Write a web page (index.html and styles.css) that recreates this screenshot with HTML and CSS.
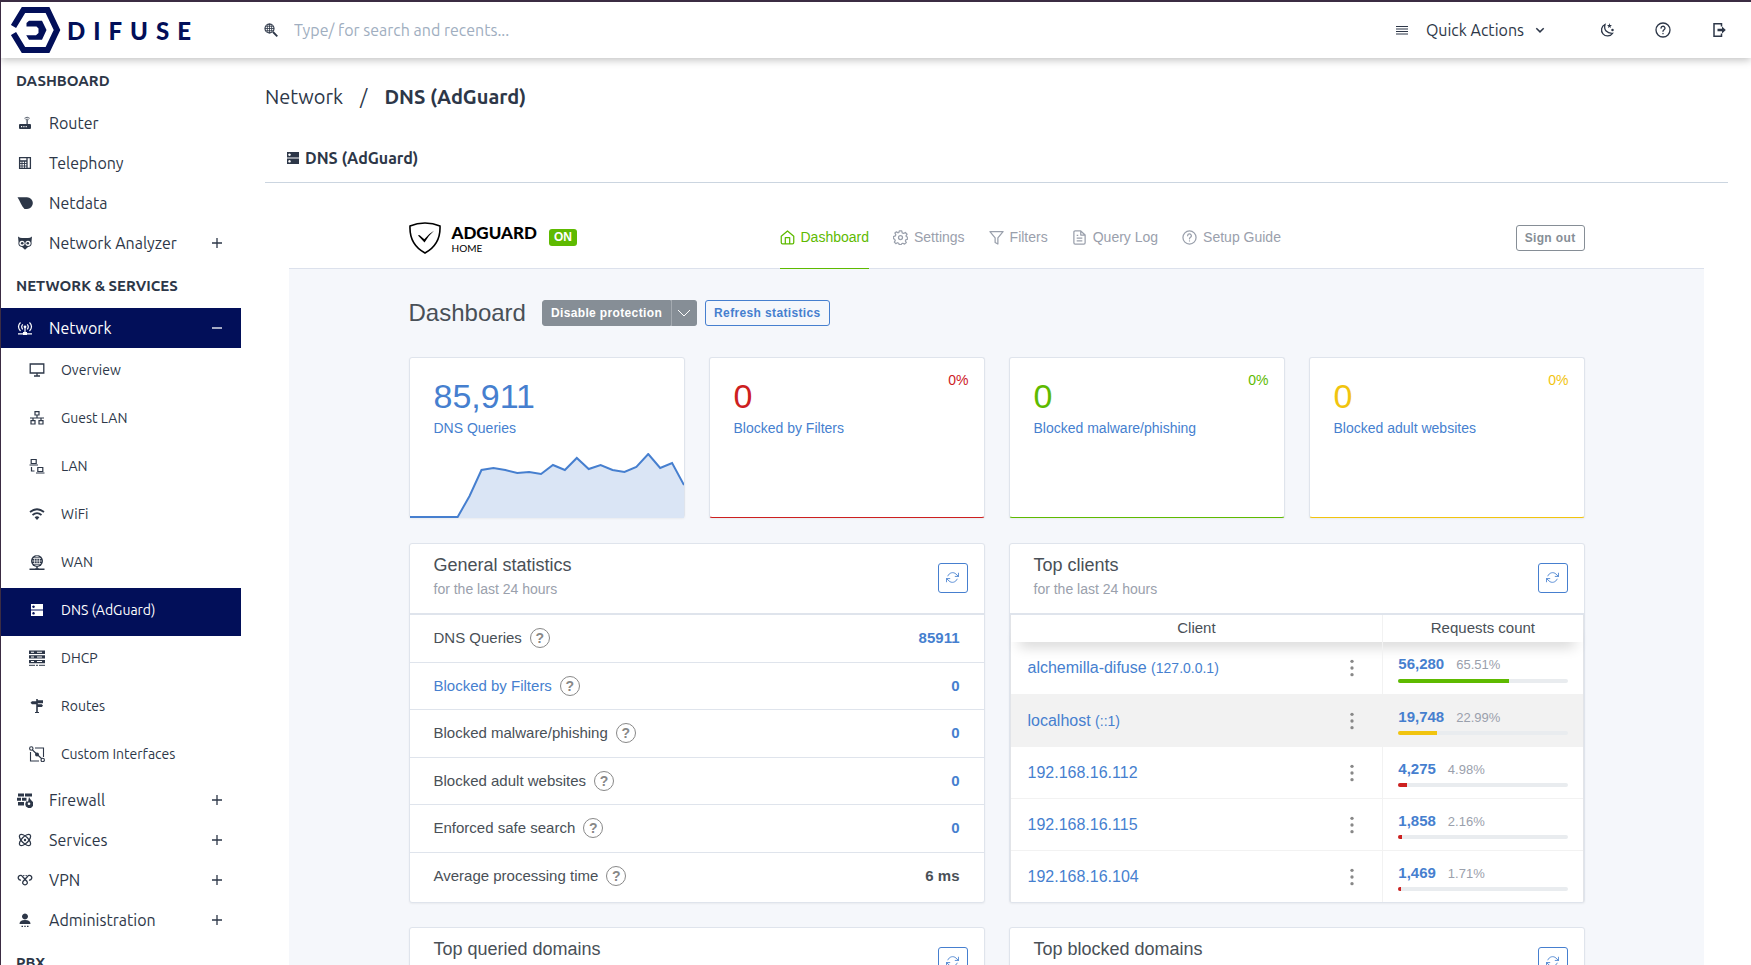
FILE: index.html
```html
<!DOCTYPE html>
<html lang="en">
<head>
    <title>Difuse - DNS (AdGuard)</title>
    <meta charset="UTF-8">
    <meta name="viewport" content="width=device-width, initial-scale=1.0">
    <link rel="stylesheet" href="styles.css">
</head>
<body>
    <!-- shared icons -->
    <svg class="sprite" aria-hidden="true">
        <symbol id="i-plus" viewBox="0 0 16 16"><path d="M8 3v10M3 8h10" fill="none" stroke="currentColor" stroke-width="1.3"/></symbol>
        <symbol id="i-minus" viewBox="0 0 16 16"><path d="M3 8h10" fill="none" stroke="currentColor" stroke-width="1.3"/></symbol>
        <symbol id="i-dns" viewBox="0 0 16 16"><path fill="currentColor" fill-rule="evenodd" d="M2 2h12v5.400H2zM2 8.600h12V14H2zM4.500 3.400a1.300 1.300 0 1 0 .01 0zM4.500 10a1.300 1.300 0 1 0 .01 0z"/></symbol>
        <symbol id="i-refresh" viewBox="0 0 24 24"><path d="M23 4v6h-6M1 20v-6h6M3.500 9a9 9 0 0 1 14.900-3.400L23 10M1 14l4.600 4.400A9 9 0 0 0 20.500 15" fill="none" stroke="currentColor" stroke-width="1.600" stroke-linecap="round" stroke-linejoin="round"/></symbol>
        <symbol id="i-help" viewBox="0 0 24 24"><g fill="none" stroke="currentColor" stroke-width="2" stroke-linecap="round"><circle cx="12" cy="12" r="10.500"/><path d="M9 9.200a3 3 0 0 1 6 .3c0 2-3 2.300-3 4.500M12 17.200v.3"/></g></symbol>
        <symbol id="i-dots" viewBox="0 0 24 24"><g fill="#888"><circle cx="12" cy="4" r="2"/><circle cx="12" cy="12" r="2"/><circle cx="12" cy="20" r="2"/></g></symbol>
    </svg>

    <header class="topbar">
        <a class="brand" href="#">
            <svg viewBox="0 0 50 46" aria-hidden="true">
                <path d="M2.500 19.500L12.500 3H36.500L46 23l-9.500 20h-24L2.500 26.500" fill="none" stroke="#020f59" stroke-width="6"/>
                <path d="M15.500 16L18 13.700H31L35.500 23 31 32.700H18L15.200 28.200H25L27.500 26V21.500L25.500 19.500H15.500z" fill="#020f59"/>
            </svg>
            <span>DIFUSE</span>
        </a>
        <label class="search">
            <svg class="icon" viewBox="0 0 16 16"><g fill="none" stroke="currentColor"><circle cx="6.500" cy="6.500" r="4.500" stroke-width="1.200"/><path d="M2 6.500h9M2.800 4.300h7.400M2.800 8.700h7.400M6.500 2v9" stroke-width=".8"/><ellipse cx="6.500" cy="6.500" rx="2.200" ry="4.500" stroke-width=".8"/><path d="M10 10l4.300 4.300" stroke-width="1.800"/></g></svg>
            <input type="text" aria-label="Search" placeholder="Type/ for search and recents...">
        </label>
        <button class="quick">
            <svg class="icon" viewBox="0 0 16 16"><path d="M2 4.500h12M2 7h12M2 9.500h12M2 12h12" fill="none" stroke="currentColor" stroke-width="1.100"/></svg>
            <span>Quick Actions</span>
            <svg class="icon" viewBox="0 0 16 16"><path d="M4.300 6.300L8 9.900l3.700-3.600" fill="none" stroke="currentColor" stroke-width="1.500"/></svg>
        </button>
        <button class="tool" aria-label="Dark mode"><svg class="icon" viewBox="0 0 16 16"><g fill="none" stroke="currentColor" stroke-width="1.300"><path d="M6 2.500C4.500 8 8 11.500 13.500 11.300A6 6 0 1 1 6 2.500z"/><path d="M10.500 1l.6 1.900 1.900.1-1.500 1.200.5 1.900-1.500-1.100-1.600 1.100.5-1.900-1.400-1.200h1.900z" fill="currentColor" stroke="none"/><circle cx="13.500" cy="8" r=".6" fill="currentColor"/></g></svg></button>
        <button class="tool" aria-label="Help"><svg class="icon" viewBox="0 0 24 24"><use href="#i-help"/></svg></button>
        <button class="tool" aria-label="Log out"><svg class="icon" viewBox="0 0 16 16"><path d="M10.500 4.500V1.700H3v12.600h7.500v-2.800" fill="none" stroke="currentColor" stroke-width="1.500"/><path d="M6.500 6.800H11V4.600L14.800 8 11 11.400V9.200H6.500z" fill="currentColor"/></svg></button>
    </header>

    <div class="shell">
        <nav class="sidebar">
            <h2>DASHBOARD</h2>
            <a href="#"><svg class="icon" viewBox="0 0 16 16"><path fill="currentColor" fill-rule="evenodd" d="M9.500 9V5h1.200v4H13a1 1 0 0 1 1 1v3a1 1 0 0 1-1 1H3a1 1 0 0 1-1-1v-3a1 1 0 0 1 1-1zM4 11v1.200h1.200V11zm2.300 0v1.200h1.200V11zm2.300 0v1.200h1.200V11z"/><path d="M7.500 3.300q2.600-2.200 5.200 0M8.600 4.700q1.500-1.200 3 0" fill="none" stroke="currentColor" stroke-width=".8"/></svg>Router</a>
            <a href="#"><svg class="icon" viewBox="0 0 16 16"><path d="M2.600 2.600h10.800v10.800H2.600zM10 2.600v10.800M2.600 6H10" fill="none" stroke="currentColor" stroke-width="1.300"/><path d="M2.600 8.500H10M2.600 11H10M5 6v7.400M7.500 6v7.400" fill="none" stroke="currentColor" stroke-width=".9"/></svg>Telephony</a>
            <a href="#"><svg class="icon" viewBox="0 0 16 16"><path d="M.5 2.200H10a5.800 5.800 0 0 1 0 11.700H7.500C4.500 11 3 6 .5 2.200z" fill="currentColor"/></svg>Netdata</a>
            <a href="#"><svg class="icon" viewBox="0 0 16 16"><path d="M1 1.500q2 1.500 4 1.500h6q2 0 4-1.500l-.5 5q.8 5-3.500 5.500L8 14.800 5 12Q.700 11.500 1.500 6.500z" fill="currentColor"/><g fill="#fff"><circle cx="5" cy="8.300" r="2.600"/><circle cx="11" cy="8.300" r="2.600"/></g><g fill="currentColor"><circle cx="5.200" cy="8.300" r="1.300"/><circle cx="10.800" cy="8.300" r="1.300"/></g></svg>Network Analyzer<svg class="toggle"><use href="#i-plus"/></svg></a>
            <h2>NETWORK &amp; SERVICES</h2>
            <a href="#" class="active"><svg class="icon" viewBox="0 0 16 16"><g fill="none" stroke="currentColor" stroke-width="1.200"><path d="M3.500 2.500q-4 4 0 8.500M5.700 4.300q-2 2.500 0 5M12.500 2.500q4 4 0 8.500M10.300 4.300q2 2.500 0 5M8 7v6M1 13.800h14"/></g><circle cx="8" cy="6.800" r="1.400" fill="currentColor"/><path d="M6 12h4v3H6z" fill="currentColor"/></svg>Network<svg class="toggle"><use href="#i-minus"/></svg></a>
            <div class="submenu">
                <a href="#"><svg class="icon" viewBox="0 0 16 16"><path d="M1.200 2h13.600v9H1.200zM8 11v3M5 14h6" fill="none" stroke="currentColor" stroke-width="1.300"/></svg>Overview</a>
                <a href="#"><svg class="icon" viewBox="0 0 16 16"><path d="M6 1.700h4V5H6zM2 10.700h4V14H2zM10 10.700h4V14h-4zM8 5v3M1 8h14M4 8v2.500M12 8v2.500" fill="none" stroke="currentColor" stroke-width="1.200"/></svg>Guest LAN</a>
                <a href="#"><svg class="icon" viewBox="0 0 16 16"><path d="M2.200 1.500h5v4h-5zM.5 7H9M8.800 9.500h5v4h-5zM7 15h8.500M2.500 9v4h3" fill="none" stroke="currentColor" stroke-width="1.200"/></svg>LAN</a>
                <a href="#"><svg class="icon" viewBox="0 0 16 16"><g fill="none" stroke="currentColor" stroke-width="1.800"><path d="M1 6q7-5.500 14 0M3.500 9q4.500-3.700 9 0"/></g><path d="M5.600 11.300q2.400-1.900 4.800 0L8 14z" fill="currentColor"/></svg>WiFi</a>
                <a href="#"><svg class="icon" viewBox="0 0 16 16"><circle cx="8" cy="7" r="6" fill="currentColor"/><g fill="none" stroke="#fff" stroke-width=".7"><ellipse cx="8" cy="7" rx="2.500" ry="5"/><path d="M8 2v10M3 7h10M4 4.500h8M4 9.500h8"/></g><path d="M.5 15.200h15M8 12v3M6 15h4" fill="none" stroke="currentColor" stroke-width="1.500"/></svg>WAN</a>
                <a href="#" class="active"><svg class="icon"><use href="#i-dns"/></svg>DNS (AdGuard)</a>
                <a href="#"><svg class="icon" viewBox="0 0 16 16"><path fill="currentColor" fill-rule="evenodd" d="M0 .5h16v3.400H0zM0 5.200h16v3.400H0zM0 9.900h16v3.400H0zM2 1.700v1h3v-1zM8 1.700v1h5v-1zM2 6.400v1h3v-1zM8 6.400v1h5v-1zM2 11.100v1h3v-1zM8 11.100v1h5v-1z"/><path d="M0 15.300h6M7 15.300h2M10 15.300h6" stroke="currentColor"/></svg>DHCP</a>
                <a href="#"><svg class="icon" viewBox="0 0 16 16"><path fill="currentColor" d="M7.200 1h1.600v1.300H14v3H8.800v1h4L14 7.800 12.800 9h-4v5H10v1H6v-1h1.200V6.300H3L1.500 4.800 3 3.300h4.200z"/></svg>Routes</a>
                <a href="#"><svg class="icon" viewBox="0 0 16 16"><g fill="none" stroke="currentColor" stroke-width="1.100"><path d="M6 2h8.500v9M1.500 6v9H10M3.500 4l9.500 9"/><circle cx="2.300" cy="2.500" r="1.700"/><circle cx="13.700" cy="14" r="1.700"/></g><circle cx="8" cy="8.500" r="2" fill="currentColor"/></svg>Custom Interfaces</a>
            </div>
            <a href="#"><svg class="icon" viewBox="0 0 16 16"><path fill="currentColor" d="M1 1.500h6v3H1zM8 1.500h7v3H8zM0 5.700h4v3H0zM5 5.700h4.500v3H5zM1 10h6v3.500H1zM12 5q1 2 2.700 3.800A4 4 0 1 1 8.500 11q.3-1.500 1.500-2l1 1z"/><circle cx="12" cy="11.800" r="1.300" fill="#fff"/></svg>Firewall<svg class="toggle"><use href="#i-plus"/></svg></a>
            <a href="#"><svg class="icon" viewBox="0 0 16 16"><g fill="none" stroke="currentColor" stroke-width="1.300"><ellipse cx="8" cy="8" rx="7.200" ry="3.300" transform="rotate(45 8 8)"/><ellipse cx="8" cy="8" rx="7.200" ry="3.300" transform="rotate(-45 8 8)"/></g><circle cx="8" cy="8" r="1.200" fill="currentColor"/></svg>Services<svg class="toggle"><use href="#i-plus"/></svg></a>
            <a href="#"><svg class="icon" viewBox="0 0 16 16"><path d="M4 8a2.300 2.300 0 1 1 1.500-3.500L10 9.500a2.300 2.300 0 1 1-4 0L10.500 4.500A2.300 2.300 0 1 1 12 8" fill="none" stroke="currentColor" stroke-width="1.300"/><path d="M6.200 3.500h1.200M8.600 3.500h1.200" stroke="currentColor"/></svg>VPN<svg class="toggle"><use href="#i-plus"/></svg></a>
            <a href="#"><svg class="icon" viewBox="0 0 16 16"><path fill="currentColor" d="M8 1.500a3 3 0 1 1-.01 0zM2.500 12q0-4 5.500-4t5.500 4zM4.500 13.800H6v1.200H4.500zM7.300 13.800h1.400v1.200H7.300zM10 13.800h1.500v1.200H10z"/></svg>Administration<svg class="toggle"><use href="#i-plus"/></svg></a>
            <h2>PBX</h2>
        </nav>

        <main class="content">
            <div class="breadcrumb"><a href="#">Network</a><span>/</span><strong>DNS (AdGuard)</strong></div>
            <div class="tabs"><a href="#"><svg class="icon"><use href="#i-dns"/></svg>DNS (AdGuard)</a></div>

            <section class="adguard">
                <header class="ag-header">
                    <div class="container">
                        <div class="ag-brand">
                            <svg viewBox="0 0 32 32" aria-hidden="true"><path d="M16 1Q8 1 1 4q-.8 18.500 15 27Q31.800 22.500 31 4 24 1 16 1z" fill="none" stroke="#000" stroke-width="1.600"/><path d="M9 13.500q1-.8 2 0l4.300 3.700Q20 11.500 25 8.800 20 13 15.500 20.500z" fill="#000"/></svg>
                            <div class="ag-name"><b>ADGUARD</b><small>HOME</small></div>
                            <span class="badge">ON</span>
                        </div>
                        <nav class="ag-nav">
                            <a href="#" class="active"><svg viewBox="0 0 24 24"><path d="M2 10L12 1.500 22 10v10a2 2 0 0 1-2 2H4a2 2 0 0 1-2-2zM8.500 22V12h7v10"/></svg>Dashboard</a>
                            <a href="#"><svg viewBox="0 0 24 24"><circle cx="12" cy="12" r="3.200"/><path d="M10 1.500h4l.7 3 2.300 1 2.700-1.600 2.800 2.800L20.800 9.400l.7 1.400 2 .7v3l-2.700.8-1 2.200 1.500 2.700-2.800 2.300-2.700-1.300-2 .8-.8 1.500h-3l-.8-2.300-2-.8-2.700 1.400-2.300-2.400 1.400-2.700-1-2L.7 14v-3.500l3-1L4.500 7.500 3 4.800 5.500 3l2.300 1.500L9.400 4z"/></svg>Settings</a>
                            <a href="#"><svg viewBox="0 0 24 24"><path d="M22.500 2.500h-21l8.300 10V20l4.400 2.500v-10z"/></svg>Filters</a>
                            <a href="#"><svg viewBox="0 0 24 24"><path d="M14 1.500H5a2 2 0 0 0-2 2v17a2 2 0 0 0 2 2h14a2 2 0 0 0 2-2V8zM14 1.500V8h7M16.500 13h-9M16.500 17.500h-9M10 8.500H7.500"/></svg>Query Log</a>
                            <a href="#"><svg><use href="#i-help"/></svg>Setup Guide</a>
                        </nav>
                        <button class="btn btn-gray">Sign out</button>
                    </div>
                </header>

                <div class="container">
                    <div class="page-head">
                        <h1>Dashboard</h1>
                        <div class="btn-group">
                            <button class="btn">Disable protection</button>
                            <button class="btn btn-drop" aria-label="More options"><svg viewBox="0 0 14 14"><path d="M1 4l6 6 6-6" fill="none" stroke="currentColor"/></svg></button>
                        </div>
                        <button class="btn btn-blue">Refresh statistics</button>
                    </div>

                    <div class="counters">
                        <div class="card counter blue">
                            <div class="value">85,911</div>
                            <a href="#">DNS Queries</a>
                            <svg class="chart" viewBox="0 0 276 65" preserveAspectRatio="none">
                                <path d="M0 65V64H48L60 43 72 17 84 15 96 17 108 20 120 19 132 21 144 12 156 17 168 5 180 16 192 12 204 17 216 19 228 14 240 1 252 15 264 10 276 32V65z" fill="#dae5f5"/>
                                <path d="M0 64H48L60 43 72 17 84 15 96 17 108 20 120 19 132 21 144 12 156 17 168 5 180 16 192 12 204 17 216 19 228 14 240 1 252 15 264 10 276 32" fill="none" stroke="#467fcf" stroke-width="2"/>
                            </svg>
                        </div>
                        <div class="card counter red"><span class="percent">0%</span><div class="value">0</div><a href="#">Blocked by Filters</a></div>
                        <div class="card counter green"><span class="percent">0%</span><div class="value">0</div><a href="#">Blocked malware/phishing</a></div>
                        <div class="card counter yellow"><span class="percent">0%</span><div class="value">0</div><a href="#">Blocked adult websites</a></div>
                    </div>

                    <div class="panels">
                        <section class="card">
                            <div class="card-head">
                                <div><h3>General statistics</h3><p>for the last 24 hours</p></div>
                                <button class="btn-refresh" aria-label="Refresh"><svg><use href="#i-refresh"/></svg></button>
                            </div>
                            <table class="stats">
                                <tr><th>DNS Queries<span class="hint">?</span></th><td>85911</td></tr>
                                <tr><th><a href="#">Blocked by Filters</a><span class="hint">?</span></th><td>0</td></tr>
                                <tr><th>Blocked malware/phishing<span class="hint">?</span></th><td>0</td></tr>
                                <tr><th>Blocked adult websites<span class="hint">?</span></th><td>0</td></tr>
                                <tr><th>Enforced safe search<span class="hint">?</span></th><td>0</td></tr>
                                <tr><th>Average processing time<span class="hint">?</span></th><td class="plain">6 ms</td></tr>
                            </table>
                        </section>

                        <section class="card">
                            <div class="card-head">
                                <div><h3>Top clients</h3><p>for the last 24 hours</p></div>
                                <button class="btn-refresh" aria-label="Refresh"><svg><use href="#i-refresh"/></svg></button>
                            </div>
                            <table class="clients">
                                <thead><tr><th>Client</th><th>Requests count</th></tr></thead>
                                <tbody>
                                    <tr>
                                        <td><div class="client"><a href="#">alchemilla-difuse <small>(127.0.0.1)</small></a><button aria-label="Actions"><svg><use href="#i-dots"/></svg></button></div></td>
                                        <td><b>56,280</b><span>65.51%</span><div class="bar green"><i style="width: 65.51%"></i></div></td>
                                    </tr>
                                    <tr class="hover">
                                        <td><div class="client"><a href="#">localhost <small>(::1)</small></a><button aria-label="Actions"><svg><use href="#i-dots"/></svg></button></div></td>
                                        <td><b>19,748</b><span>22.99%</span><div class="bar yellow"><i style="width: 22.99%"></i></div></td>
                                    </tr>
                                    <tr>
                                        <td><div class="client"><a href="#">192.168.16.112</a><button aria-label="Actions"><svg><use href="#i-dots"/></svg></button></div></td>
                                        <td><b>4,275</b><span>4.98%</span><div class="bar red"><i style="width: 4.98%"></i></div></td>
                                    </tr>
                                    <tr>
                                        <td><div class="client"><a href="#">192.168.16.115</a><button aria-label="Actions"><svg><use href="#i-dots"/></svg></button></div></td>
                                        <td><b>1,858</b><span>2.16%</span><div class="bar red"><i style="width: 2.16%"></i></div></td>
                                    </tr>
                                    <tr>
                                        <td><div class="client"><a href="#">192.168.16.104</a><button aria-label="Actions"><svg><use href="#i-dots"/></svg></button></div></td>
                                        <td><b>1,469</b><span>1.71%</span><div class="bar red"><i style="width: 1.71%"></i></div></td>
                                    </tr>
                                </tbody>
                            </table>
                        </section>

                        <section class="card">
                            <div class="card-head">
                                <div><h3>Top queried domains</h3><p>for the last 24 hours</p></div>
                                <button class="btn-refresh" aria-label="Refresh"><svg><use href="#i-refresh"/></svg></button>
                            </div>
                        </section>
                        <section class="card">
                            <div class="card-head">
                                <div><h3>Top blocked domains</h3><p>for the last 24 hours</p></div>
                                <button class="btn-refresh" aria-label="Refresh"><svg><use href="#i-refresh"/></svg></button>
                            </div>
                        </section>
                    </div>
                </div>
            </section>
        </main>
    </div>
</body>
</html>
```
FILE: styles.css
```css
* {
    box-sizing: border-box;
}
body {
    margin: 0;
    height: 100vh;
    display: flex;
    flex-direction: column;
    overflow: hidden;
    border-top: 2px solid #3b2c43;
    border-left: 1px solid #3b2c43;
    background: #fff;
    color: #2d3748;
    font-family: Ubuntu, "Noto Sans", sans-serif;
    font-size: 16px;
}
a {
    color: inherit;
    text-decoration: none;
}
button {
    padding: 0;
    border: none;
    background: none;
    color: inherit;
    font: inherit;
    cursor: pointer;
}
h1, h2, h3, p {
    margin: 0;
}
svg {
    flex: none;
}
.sprite {
    display: none;
}
.icon {
    width: 16px;
    height: 16px;
}

/* top bar */
.topbar {
    flex: none;
    display: flex;
    align-items: center;
    height: 56px;
    padding-right: 24px;
    position: relative;
    background: #fff;
    box-shadow: 0 2px 8px rgba(0, 0, 0, 0.25);
}
.brand {
    display: flex;
    align-items: center;
    gap: 6px;
    width: 240px;
    padding-left: 10px;
    color: #020f59;
    font-family: Lato, sans-serif;
    font-size: 24px;
    font-weight: 900;
    letter-spacing: 8px;
}
.brand svg {
    width: 50px;
    height: 46px;
}
.search {
    flex: 1;
    display: flex;
    align-items: center;
    gap: 15px;
    padding-left: 22px;
}
.search input {
    flex: 1;
    padding: 0;
    border: none;
    outline: none;
    font: inherit;
}
.search input::placeholder {
    color: #a0aec0;
}
.quick {
    display: flex;
    align-items: center;
    gap: 16px;
    margin-right: 31px;
}
.quick span {
    margin-right: -8px;
}
.tool {
    width: 56px;
    height: 40px;
    display: flex;
    align-items: center;
    justify-content: center;
}
.tool:last-child {
    width: 16px;
    margin-left: 20px;
}

/* sidebar */
.shell {
    flex: 1;
    display: flex;
    min-height: 0;
}
.sidebar {
    flex: none;
    width: 240px;
    overflow: hidden;
}
.sidebar h2 {
    padding-left: 15px;
    font-size: 15px;
    line-height: 45px;
}
.sidebar a {
    display: flex;
    align-items: center;
    gap: 16px;
    height: 40px;
    padding: 0 16px;
}
.sidebar .active {
    background: #020f59;
    color: #fff;
}
.sidebar .toggle {
    width: 16px;
    height: 16px;
    margin-left: auto;
}
.sidebar .submenu a {
    height: 48px;
    padding: 0 28px 4px;
    font-size: 14px;
}

/* content */
.content {
    flex: 1;
    min-width: 0;
    padding: 22px 23px 0 24px;
    overflow: hidden;
}
.breadcrumb {
    display: flex;
    gap: 17px;
    font-size: 20px;
    line-height: 34px;
}
.tabs {
    margin-top: 24px;
    padding-left: 20px;
    border-bottom: 1px solid #cbd5e0;
}
.tabs a {
    display: flex;
    align-items: center;
    gap: 4px;
    height: 44px;
    padding-bottom: 4px;
    font-weight: bold;
}

/* adguard */
.adguard {
    margin: 24px 24px 0;
    min-height: 100%;
    background: #f5f7fb;
    color: #495057;
    font-family: "Liberation Sans", Arial, sans-serif;
    font-size: 15px;
    line-height: 1.5;
}
.container {
    max-width: 1176px;
    margin: 0 auto;
}
.ag-header {
    background: #fff;
    border-bottom: 1px solid #dce1ec;
}
.ag-header .container {
    display: flex;
    align-items: center;
    height: 61px;
}
.ag-brand {
    display: flex;
    align-items: center;
    width: 371px;
}
.ag-brand svg {
    width: 32px;
    height: 32px;
}
.ag-name {
    display: flex;
    flex-direction: column;
    margin: 2px 12px 0 11px;
    color: #000;
    font-family: Lato, sans-serif;
}
.ag-name b {
    font-size: 17px;
    font-weight: 900;
    line-height: 18px;
}
.ag-name small {
    font-size: 10px;
    line-height: 12px;
}
.badge {
    padding: 0 5px;
    border-radius: 3px;
    background: #5eba00;
    color: #fff;
    font-size: 12px;
    font-weight: bold;
    line-height: 17px;
}
.ag-nav {
    display: flex;
    gap: 24px;
    margin-right: auto;
    color: #9aa0ac;
    font-size: 14px;
}
.ag-nav a {
    display: flex;
    align-items: center;
    gap: 6px;
    height: 62px;
    margin-bottom: -1px;
    border-bottom: 1px solid transparent;
}
.ag-nav .active {
    border-color: #5eba00;
    color: #5eba00;
}
.ag-nav svg {
    width: 15px;
    height: 15px;
    fill: none;
    stroke: currentColor;
    stroke-width: 2;
    stroke-linejoin: round;
}
.btn {
    height: 26px;
    padding: 0 8px;
    border: 1px solid #868e96;
    border-radius: 3px;
    background: #868e96;
    color: #fff;
    font-size: 12px;
    font-weight: bold;
    letter-spacing: 0.03em;
}
.btn-gray {
    background: #fff;
    color: #868e96;
}
.btn-blue {
    background: transparent;
    border-color: #467fcf;
    color: #467fcf;
}
.page-head {
    display: flex;
    align-items: center;
    gap: 8px;
    padding: 24px 0;
}
.page-head h1 {
    margin-right: 8px;
    font-size: 24px;
    font-weight: normal;
    line-height: 40px;
}
.btn-group {
    display: flex;
}
.btn-group .btn:first-child {
    border-radius: 3px 0 0 3px;
}
.btn-group .btn-drop {
    display: flex;
    align-items: center;
    padding: 0 5px;
    border-left-color: #a4aab0;
    border-radius: 0 3px 3px 0;
}
.btn-drop svg {
    width: 14px;
    height: 14px;
}
.card {
    border: 1px solid #dfe4ec;
    border-radius: 3px;
    background: #fff;
    box-shadow: 0 1px 2px rgba(0, 0, 0, 0.05);
}
.counters {
    display: grid;
    grid-template-columns: repeat(4, 1fr);
    gap: 24px;
}
.counter {
    position: relative;
    height: 161px;
    padding: 17px 24px;
}
.counter .value {
    font-size: 34px;
    line-height: 42px;
}
.counter a {
    color: #467fcf;
    font-size: 14px;
    line-height: 22px;
}
.counter .percent {
    position: absolute;
    top: 12px;
    right: 15px;
    font-size: 14px;
}
.counter .chart {
    position: absolute;
    left: 0;
    bottom: -1px;
    width: 100%;
    height: 65px;
}
.counter.blue {
    color: #467fcf;
}
.counter.red {
    border-bottom-color: #cd201f;
    color: #cd201f;
}
.counter.green {
    border-bottom-color: #5eba00;
    color: #5eba00;
}
.counter.yellow {
    border-bottom-color: #f1c40f;
    color: #f1c40f;
}

.panels {
    display: grid;
    grid-template-columns: repeat(2, 1fr);
    gap: 24px;
    margin-top: 25px;
}
.card-head {
    display: flex;
    align-items: center;
    justify-content: space-between;
    height: 71px;
    padding: 0 16px 2px 24px;
    border-bottom: 2px solid #dfe4ec;
}
.card-head h3 {
    font-size: 18px;
    font-weight: normal;
    line-height: 24px;
}
.card-head p {
    margin-bottom: 2px;
    color: #9aa0ac;
    font-size: 14px;
    line-height: 24px;
}
.btn-refresh {
    display: flex;
    align-items: center;
    justify-content: center;
    width: 30px;
    height: 30px;
    border: 1px solid #467fcf;
    border-radius: 3px;
    color: #467fcf;
}
.btn-refresh svg {
    width: 13px;
    height: 13px;
}
table {
    width: 100%;
    border-collapse: collapse;
}
.stats th, .stats td {
    padding: 12px 24px;
    border-bottom: 1px solid #dfe4ec;
    font-weight: normal;
    text-align: left;
}
.stats tr:last-child > * {
    border-bottom: none;
}
.stats td {
    color: #467fcf;
    font-weight: bold;
    text-align: right;
}
.stats td.plain {
    color: #495057;
}
.stats a, .clients a, .clients b {
    color: #467fcf;
}
.hint {
    display: inline-block;
    width: 20px;
    height: 20px;
    margin: -2px 0 -2px 8px;
    border: 1px solid #888;
    border-radius: 50%;
    color: #888;
    font-size: 14px;
    font-weight: bold;
    line-height: 18px;
    text-align: center;
}
.clients {
    table-layout: fixed;
    border: 1px solid #e2e4e8;
    border-width: 0 1px;
    border-collapse: separate;
    border-spacing: 0;
}
.clients th {
    height: 27px;
    padding: 0;
    font-weight: normal;
}
.clients th:last-child {
    width: 35%;
}
.clients thead {
    box-shadow: 0 12px 14px -8px rgba(0, 0, 0, 0.2);
}
.clients td {
    height: 52px;
    padding: 0 15px;
    border-top: 1px solid #f2f2f2;
}
.clients td:first-child {
    padding-left: 17px;
}
.clients th + th, .clients td + td {
    border-left: 1px solid #f2f2f2;
}
.clients tbody tr:first-child td {
    border-top: none;
}
.clients .hover {
    background: #f2f2f2;
}
.client {
    display: flex;
    align-items: center;
    justify-content: space-between;
    padding-right: 5px;
    font-size: 16px;
}
.client small {
    font-size: 14px;
}
.client button {
    display: flex;
}
.client svg {
    width: 20px;
    height: 20px;
}
.clients td span {
    margin-left: 12px;
    color: #9aa0ac;
    font-size: 13px;
}
.bar {
    height: 4px;
    margin-top: 3px;
    overflow: hidden;
    border-radius: 3px;
    background: #e9ecef;
}
.bar i {
    display: block;
    height: 100%;
}
.bar.green i {
    background: #5eba00;
}
.bar.yellow i {
    background: #f1c40f;
}
.bar.red i {
    background: #cd201f;
}
```
